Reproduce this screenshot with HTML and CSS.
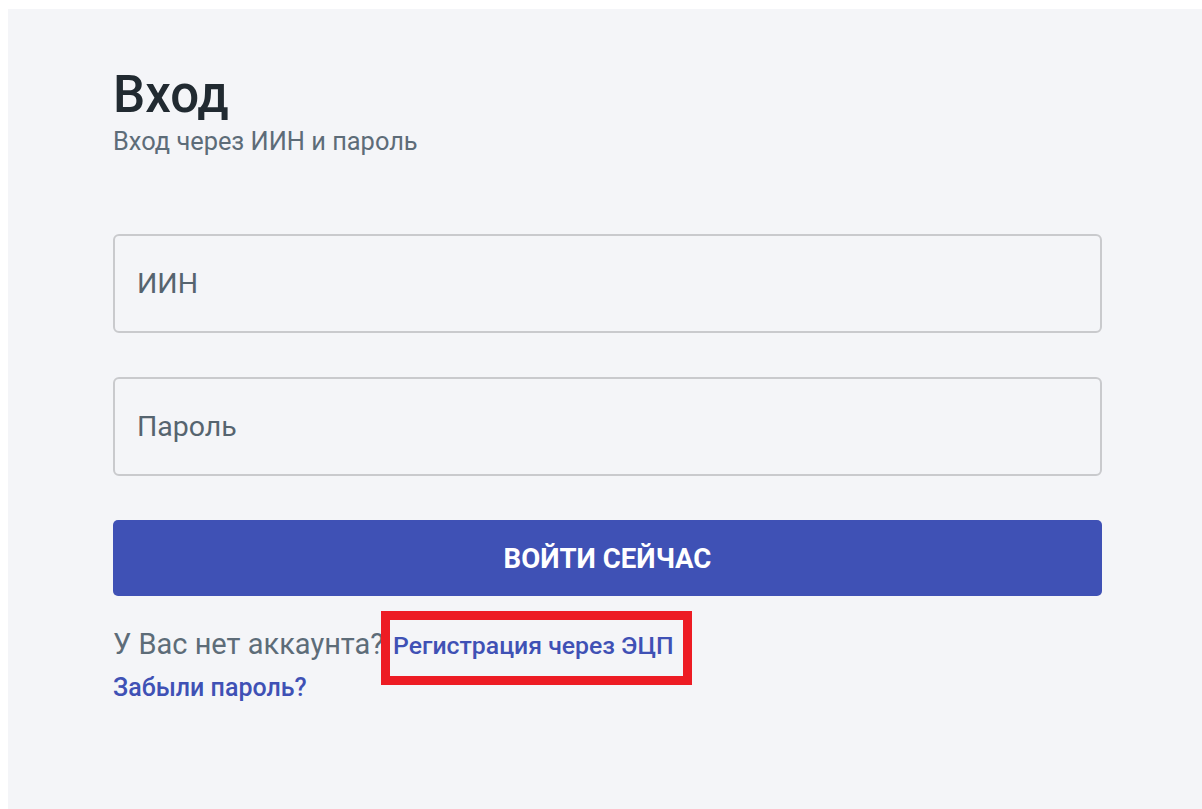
FILE: index.html
```html
<!DOCTYPE html>
<html lang="ru">
<head>
<meta charset="utf-8">
<title>Вход</title>
<link rel="stylesheet" href="styles.css">
</head>
<body>
<main class="panel">
  <header class="head">
    <h1 class="title">Вход</h1>
    <p class="subtitle">Вход через ИИН и пароль</p>
  </header>
  <form class="form">
    <input class="field" type="text" placeholder="ИИН">
    <input class="field" type="password" placeholder="Пароль">
    <button class="submit" type="button">ВОЙТИ СЕЙЧАС</button>
  </form>
  <p class="signup">У Вас нет аккаунта?<a class="link link-marked" href="#">Регистрация через ЭЦП<span class="mark"></span></a></p>
  <p class="forgot"><a class="link" href="#">Забыли пароль?</a></p>
</main>
</body>
</html>
```

FILE: styles.css
```css
html, body {
  margin: 0;
  height: 100%;
  background: #ffffff;
}

body {
  padding: 9px 0 0 8px;
  box-sizing: border-box;
  font-family: Roboto, "Liberation Sans", Arial, sans-serif;
}

.panel {
  background: #f4f5f8;
  min-height: 100%;
  padding: 60px 100px 0 105px;
  box-sizing: border-box;
}

.head {
  display: flex;
  flex-direction: column;
}

.title {
  margin: 0;
  font-size: 51px;
  line-height: 52px;
  font-weight: 500;
  color: #212a31;
}

.subtitle {
  margin: 6px 0 0;
  font-size: 25.4px;
  line-height: 29px;
  color: #5d6c78;
}

.form {
  margin-top: 78px;
  display: flex;
  flex-direction: column;
  gap: 44px;
}

.field {
  height: 99px;
  box-sizing: border-box;
  border: 2px solid #c9cacd;
  border-radius: 6px;
  background: #f4f5f8;
  padding: 0 22px;
  font-family: inherit;
  font-size: 28.5px;
  color: #212a31;
  outline: none;
}

.field::placeholder {
  color: #56646f;
}

.submit {
  height: 76px;
  border: none;
  border-radius: 5px;
  background: #3f51b5;
  color: #ffffff;
  font-family: inherit;
  font-size: 27.6px;
  font-weight: 700;
  cursor: pointer;
}

.signup {
  margin: 31px 0 0;
  font-size: 29px;
  line-height: 34px;
  color: #5d6c78;
}

.link {
  color: #3f51b5;
  font-weight: 500;
  font-size: 25px;
  text-decoration: none;
}

.link-marked {
  position: relative;
  margin-left: 9px;
  font-size: 24.8px;
}

/* red highlight frame drawn around the sign-up link */
.mark {
  position: absolute;
  left: -12px;
  right: -18px;
  top: -20px;
  bottom: -25px;
  border: 9px solid #ed1c24;
}

.forgot {
  margin: 10px 0 0;
  font-size: 25px;
  line-height: 30px;
}
```
